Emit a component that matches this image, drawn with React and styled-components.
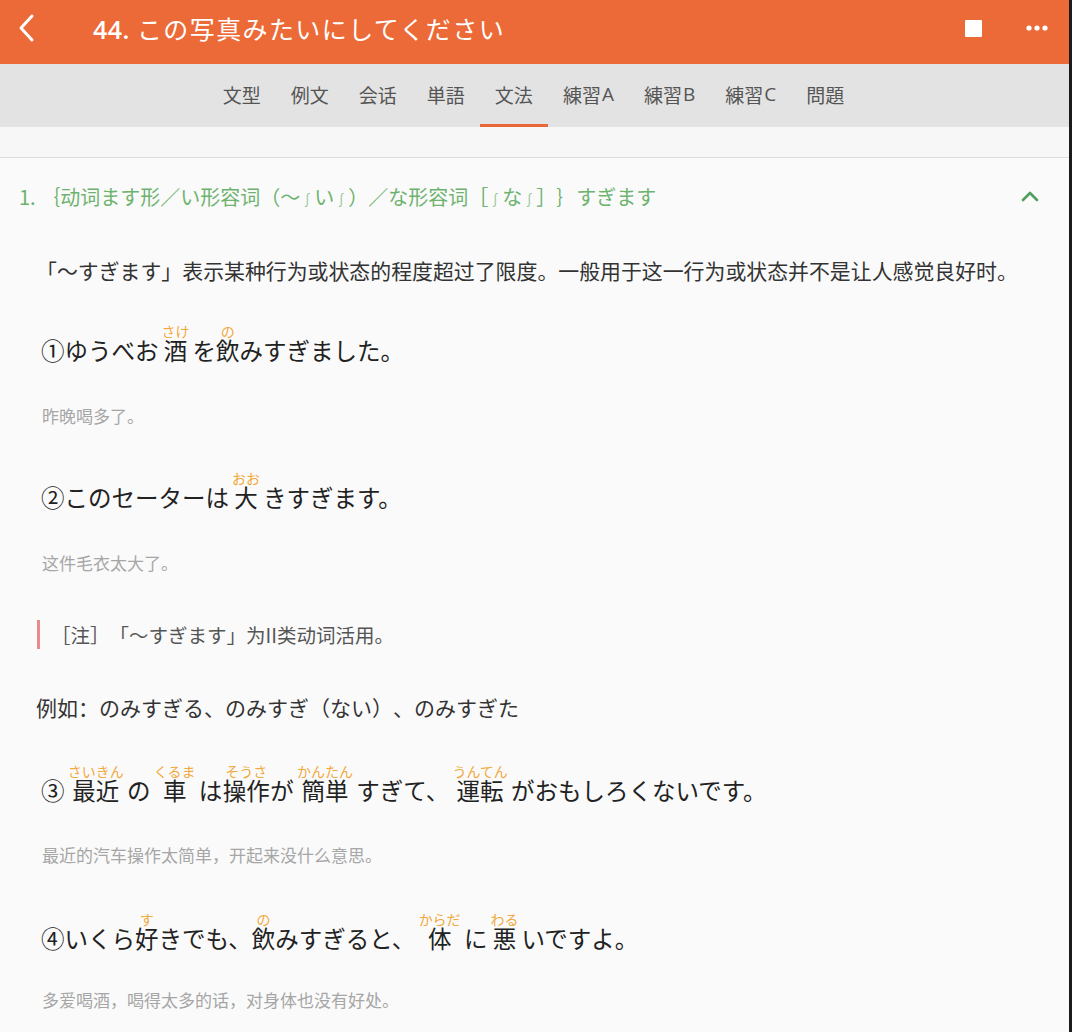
import React from "react";
import styled, { createGlobalStyle } from "styled-components";

const Global = createGlobalStyle`
  html, body { margin: 0; padding: 0; height: 100%; overflow: hidden; background: #1b1b1b; }
  #root { height: 100%; }
  * { box-sizing: border-box; }
  body { text-spacing-trim: space-all; }
`;

const JP = `"Noto Sans CJK JP", "Noto Sans", sans-serif`;
const SC = `"Noto Sans CJK SC", "Noto Sans", sans-serif`;

const Shell = styled.div`
  display: flex;
  height: 100%;
`;

const Page = styled.div`
  flex: 1;
  display: flex;
  flex-direction: column;
  background: #fafafa;
  font-family: ${SC};
  text-spacing-trim: space-all;
  overflow: hidden;
`;

const Edge = styled.div`
  width: 3px;
  flex-shrink: 0;
  background: #1b1b1b;
`;

const Header = styled.header`
  height: 64px;
  flex-shrink: 0;
  background: #ec6a37;
  display: flex;
  align-items: center;
  padding: 0 21px 8px 16px;
  color: #fff;
`;

const IconButton = styled.span`
  display: flex;
  align-items: center;
  justify-content: center;
`;

const Title = styled.h1`
  flex: 1;
  margin: 0 0 0 55px;
  font-family: ${JP};
  font-weight: 400;
  font-size: 25px;
  letter-spacing: 1.4px;
  line-height: 32px;
`;

const Num = styled.span`
  font-family: "Open Sans", sans-serif;
  font-weight: 600;
  letter-spacing: 0.5px;
`;

const Actions = styled.div`
  display: flex;
  align-items: center;
  gap: 44px;
`;

const StopIcon = styled.span`
  display: block;
  width: 17px;
  height: 17px;
  background: #fff;
  border-radius: 1px;
`;

const TabBar = styled.nav`
  height: 63px;
  flex-shrink: 0;
  background: #e3e3e3;
  display: flex;
  justify-content: center;
  align-items: stretch;
  padding-right: 2px;
`;

const Tab = styled.div`
  display: flex;
  align-items: center;
  padding: 0 15px;
  font-family: ${JP};
  font-size: 19px;
  color: #555;
  border-bottom: 3px solid ${(p) => (p.$active ? "#e8683a" : "transparent")};
`;

const Latin = styled.span`
  font-family: "Open Sans", sans-serif;
  margin-left: 1px;
`;

const Strip = styled.div`
  height: 31px;
  flex-shrink: 0;
  background: #f7f7f7;
  border-bottom: 1px solid #dcdcdc;
`;

const Content = styled.main`
  display: flex;
  flex-direction: column;
`;

const SectionHead = styled.div`
  height: 76px;
  display: flex;
  align-items: center;
  justify-content: space-between;
  padding: 0 30px 0 19px;
  color: #6db36e;
  font-size: 20px;
`;

const HeadText = styled.span`
  white-space: nowrap;
`;

const Integral = styled.span`
  font-size: 14px;
  color: #9cc99c;
`;

const Body = styled.div`
  display: flex;
  flex-direction: column;
  padding: 0 20px 0 36px;
`;

const Paragraph = styled.p`
  margin: ${(p) => p.$mt || 21}px 0 0;
  font-size: ${(p) => p.$size || 20.9}px;
  line-height: 30px;
  color: #333;
  white-space: nowrap;
`;

const Example = styled.p`
  margin: ${(p) => p.$mt || 40}px 0 0 5px;
  font-family: ${JP};
  font-size: 23.5px;
  line-height: 23px;
  word-spacing: -5px;
  color: #222;
  white-space: nowrap;
`;

const Ruby = styled.span`
  display: inline-block;
  text-align: center;
  line-height: 23px;
  word-spacing: 0;
`;

const Rt = styled.span`
  display: block;
  padding: 0 3px;
  font-size: 14px;
  line-height: 15px;
  color: #f1a93c;
`;

const Translation = styled.p`
  margin: ${(p) => p.$mt || 44}px 0 0 6px;
  font-size: 17px;
  line-height: 22px;
  color: #a6a6a6;
`;

const Note = styled.div`
  margin: 46px 0 0 1px;
  height: 29px;
  display: flex;
  align-items: center;
  border-left: 3px solid #e78b8b;
  padding-left: 11px;
  font-size: 19.5px;
  color: #555;
`;

const R = ({ t, children }) => (
  <Ruby>
    <Rt>{t}</Rt>
    {children}
  </Ruby>
);

const tabs = [
  ["文型"],
  ["例文"],
  ["会话"],
  ["単語"],
  ["文法"],
  ["練習", "A"],
  ["練習", "B"],
  ["練習", "C"],
  ["問題"],
];

export default function App() {
  return (
    <>
      <Global />
      <Shell>
        <Page>
          <Header>
            <IconButton>
              <svg width="22" height="30" viewBox="0 0 22 30">
                <polyline points="16,3 5,15 16,27" fill="none" stroke="#fff" strokeWidth="3" strokeLinecap="round" strokeLinejoin="round" />
              </svg>
            </IconButton>
            <Title>
              <Num>44.</Num> この写真みたいにしてください
            </Title>
            <Actions>
              <StopIcon />
              <IconButton>
                <svg width="22" height="6" viewBox="0 0 22 6">
                  <circle cx="3" cy="3" r="2.6" fill="#fff" />
                  <circle cx="11" cy="3" r="2.6" fill="#fff" />
                  <circle cx="19" cy="3" r="2.6" fill="#fff" />
                </svg>
              </IconButton>
            </Actions>
          </Header>
          <TabBar>
            {tabs.map(([jp, letter]) => (
              <Tab key={jp + (letter || "")} $active={jp === "文法"}>
                {jp}
                {letter && <Latin>{letter}</Latin>}
              </Tab>
            ))}
          </TabBar>
          <Strip />
          <Content>
            <SectionHead>
              <HeadText>
                1. ｛动词ます形／い形容词（～<Integral>∫</Integral>い<Integral>∫</Integral>）／な形容词［<Integral>∫</Integral>な<Integral>∫</Integral>］｝すぎます
              </HeadText>
              <svg width="18" height="12" viewBox="0 0 18 12">
                <polyline points="2,10 9,3 16,10" fill="none" stroke="#4f9f5d" strokeWidth="2.6" strokeLinecap="round" strokeLinejoin="round" />
              </svg>
            </SectionHead>
            <Body>
              <Paragraph>
                「～すぎます」表示某种行为或状态的程度超过了限度。一般用于这一行为或状态并不是让人感觉良好时。
              </Paragraph>

              <Example $mt={39}>
                ①ゆうべお<R t="さけ">酒</R>を<R t="の">飲</R>みすぎました。
              </Example>
              <Translation $mt={43}>昨晚喝多了。</Translation>

              <Example $mt={44}>
                ②このセーターは<R t="おお">大</R>きすぎます。
              </Example>
              <Translation $mt={43}>这件毛衣太大了。</Translation>

              <Note>［注］「～すぎます」为II类动词活用。</Note>

              <Paragraph $mt={43} $size={21}>
                例如：のみすぎる、のみすぎ（ない）、のみすぎた
              </Paragraph>

              <Example $mt={42}>
                ③ <R t="さいきん">最近</R> の <R t="くるま">車</R> は<R t="そうさ">操作</R>が <R t="かんたん">簡単</R> すぎて、 <R t="うんてん">運転</R> がおもしろくないです。
              </Example>
              <Translation $mt={42}>最近的汽车操作太简单，开起来没什么意思。</Translation>

              <Example $mt={46}>
                ④いくら<R t="す">好</R>きでも、<R t="の">飲</R>みすぎると、 <R t="からだ">体</R> に<R t="わる">悪</R>いですよ。
              </Example>
              <Translation $mt={39}>多爱喝酒，喝得太多的话，对身体也没有好处。</Translation>
            </Body>
          </Content>
        </Page>
        <Edge />
      </Shell>
    </>
  );
}
